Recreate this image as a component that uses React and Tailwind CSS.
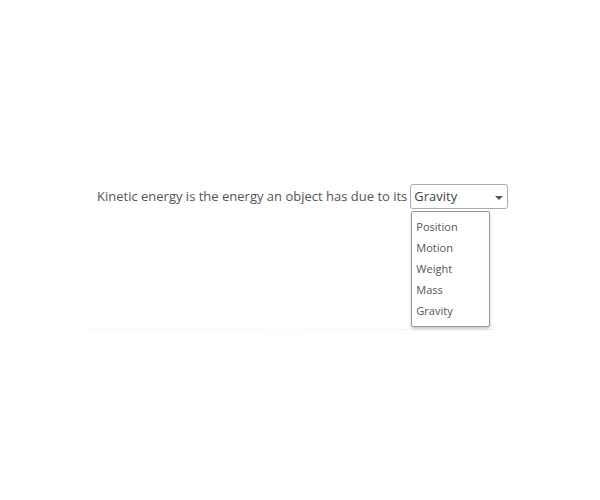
export default function App() {
  const options = ['Position', 'Motion', 'Weight', 'Mass', 'Gravity']

  return (
    <div className="w-[600px] h-[500px] bg-white font-['Open_Sans',sans-serif] text-[#555] relative">
      <div className="pt-[184px] pl-[97px] flex items-center">
        <span className="text-[13px] leading-[25px] mr-[3px]">Kinetic energy is the energy an object has due to its</span>
        <div className="relative">
          <div className="w-[98px] h-[25px] border border-[#aaa] rounded-[3px] flex items-center justify-between pl-[3px] pr-[4px]">
            <span className="text-[13px] text-[#444]">Gravity</span>
            <span className="w-0 h-0 border-l-[4px] border-r-[4px] border-t-[4px] border-l-transparent border-r-transparent border-t-[#555] mt-[3px]" />
          </div>
          <ul className="absolute left-[1px] top-[27px] w-[79px] h-[116px] bg-white border border-[#999] rounded-[2px] shadow-[0_2px_3px_rgba(0,0,0,0.2)] z-10 pt-[4px]">
            {options.map(o => (
              <li key={o} className="text-[11px] leading-[21px] pl-[4px] text-[#555]">{o}</li>
            ))}
          </ul>
        </div>
      </div>
      {/* faint card edge */}
      <div className="absolute left-[85px] top-[329px] w-[410px] h-[1px] bg-gradient-to-r from-[#f6f6f6] via-[#fafafa] to-[#f2f2f2]" />
    </div>
  )
}
